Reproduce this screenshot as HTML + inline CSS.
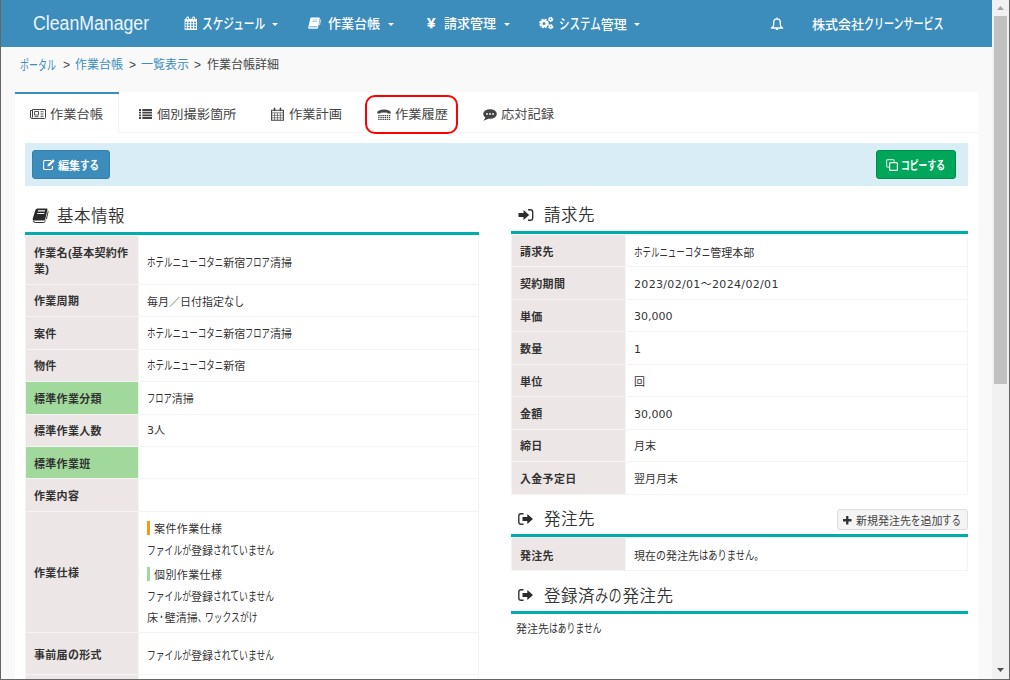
<!DOCTYPE html>
<html lang="ja"><head><meta charset="utf-8"><title>CleanManager</title>
<style>
*{box-sizing:border-box;margin:0;padding:0}
html,body{width:1010px;height:680px;overflow:hidden}
body{position:relative;background:#f9f9f9;font-family:"Liberation Sans","Noto Sans CJK JP",sans-serif;font-size:13px;color:#333;line-height:1}
.k{font-size:1.1em;display:inline-block;transform:scaleX(var(--s));transform-origin:0 50%;margin-right:calc(var(--n) * (var(--s) - 1) * 1em);white-space:nowrap}
.abs{position:absolute}
.t{position:absolute;white-space:nowrap;line-height:1}
a{color:#3c8dbc;text-decoration:none}
/* window chrome */
#lb{left:0;top:0;width:1px;height:680px;background:#666}
#rb{left:1009px;top:0;width:1px;height:680px;background:#666}
#bb{left:0;top:679px;width:1010px;height:1px;background:#666}
#sb{left:992px;top:0;width:17px;height:679px;background:#f1f1f1}
#thumb{left:994px;top:16px;width:13px;height:368px;background:#c1c1c1}
/* navbar */
#nav{left:1px;top:0;width:991px;height:47px;background:#3c8dbc;color:#fff}
#nav .t{color:#fff;font-size:13px}
#brand{font-size:20px !important;left:32px;top:13px;transform:scaleX(.885);transform-origin:0 0;color:rgba(255,255,255,.93) !important}
.caret{position:absolute;width:0;height:0;border-left:3px solid transparent;border-right:3px solid transparent;border-top:3px solid #fff;top:23px}
/* tabs */
#panel{left:15px;top:92px;width:963px;height:588px;background:#fff}
#tabline{left:15px;top:132px;width:963px;height:1px;background:#f4f4f4}
#act{left:15px;top:92px;width:104px;height:41px;background:#fff;border-right:1px solid #f4f4f4}
#act:before{content:'';position:absolute;left:0;top:0;width:104px;height:2px;background:#3c8dbc}
.tab{font-size:12.2px;transform:scaleX(1.085);transform-origin:0 0;color:#444;top:109px}
#anno{left:365px;top:95px;width:93px;height:39px;border:2px solid #f00;border-radius:10px}
/* action bar */
#bar{left:25px;top:143px;width:943px;height:43px;background:#d9edf7}
.btn{position:absolute;height:29px;border-radius:3px;color:#fff;font-size:11px;font-weight:bold;white-space:nowrap}
#edit{left:32px;top:150px;width:78px;background:#3c8dbc;border:1px solid #367fa9}
#copy{left:876px;top:150px;width:80px;background:#00a65a;border:1px solid #008d4c}
/* section headings */
.h{font-size:16.5px;letter-spacing:.5px;color:#333;font-weight:350}
.teal{position:absolute;height:3px;background:#00adab}
/* tables */
table{position:absolute;border-collapse:collapse;table-layout:fixed;font-size:11px}
td,th{border:1px solid #f4f4f4;text-align:left;vertical-align:middle;padding:0 8px;line-height:14px}
th{background:#ece6e6;font-weight:bold;color:#333;letter-spacing:.3px}
th.g{background:#a0d99b}
td{background:#fff;color:#333}
.bl{display:inline-block;width:3px;height:14px;vertical-align:-2px;margin-right:4px}
#addbtn{left:837px;top:509px;width:131px;height:21px;border:1px solid #ddd;border-radius:3px;background:#f4f4f4;font-size:11px;color:#444}


.bc{top:59px;font-size:12px}
.nv{font-weight:500}
.num{font-family:"DejaVu Sans","Noto Sans CJK JP",sans-serif;font-size:11px}
.d1 th,.d1 td{padding-top:2px}
#nav #yen{font-size:14px}
.p1{position:relative;top:1px}

</style></head>
<body>
<div id="nav" class="abs">
  <div class="t" id="brand">CleanManager</div>
  <svg class="abs" style="left:182.500px;top:16px" width="14" height="15" viewBox="0 0 14 15"><rect x="0.600" y="2.800" width="12.400" height="11.200" rx=".6" fill="#fff"/><rect x="2.400" y="0.400" width="2.600" height="4" rx="1.200" fill="#fff"/><rect x="8.400" y="0.400" width="2.600" height="4" rx="1.200" fill="#fff"/><rect x="3.250" y="1.400" width=".9" height="2.200" rx=".4" fill="#3c8dbc"/><rect x="9.250" y="1.400" width=".9" height="2.200" rx=".4" fill="#3c8dbc"/><rect x="1.4" y="5.6" width="1.800" height="1.700" fill="#3c8dbc"/><rect x="4.3" y="5.6" width="1.800" height="1.700" fill="#3c8dbc"/><rect x="7.2" y="5.6" width="1.800" height="1.700" fill="#3c8dbc"/><rect x="10.1" y="5.6" width="1.800" height="1.700" fill="#3c8dbc"/><rect x="1.4" y="8.2" width="1.800" height="1.700" fill="#3c8dbc"/><rect x="4.3" y="8.2" width="1.800" height="1.700" fill="#3c8dbc"/><rect x="7.2" y="8.2" width="1.800" height="1.700" fill="#3c8dbc"/><rect x="10.1" y="8.2" width="1.800" height="1.700" fill="#3c8dbc"/><rect x="1.4" y="10.8" width="1.800" height="1.700" fill="#3c8dbc"/><rect x="4.3" y="10.8" width="1.800" height="1.700" fill="#3c8dbc"/><rect x="7.2" y="10.8" width="1.800" height="1.700" fill="#3c8dbc"/><rect x="10.1" y="10.8" width="1.800" height="1.700" fill="#3c8dbc"/></svg>
  <div class="t nv" style="left:201px;top:17px"><span class="k" style="--n:6;--s:0.745">スケジュール</span></div><i class="caret" style="left:271px"></i>
  <svg class="abs" style="left:307.200px;top:17.300px" width="14" height="13" viewBox="0 0 14 13"><path d="M3.500 0.600h7.600q.9 0 .7.900l-1.700 9q-.2 1.200-1.300 1.200h-7.400q-1.500 0-1.100-1.500l1.900-8.300q.3-1.300 1.300-1.300z" fill="#fff"/><path d="M1.400 9.800h8" stroke="#3c8dbc" stroke-width=".8"/><path d="M4.700 2.900h4.300M4.400 4.500h4.300" stroke="#3c8dbc" stroke-opacity=".45" stroke-width="1"/><path d="M12.600 2.600l-1.100 5.400" stroke="#fff" stroke-width=".9" stroke-opacity=".9"/></svg>
  <div class="t nv" style="left:327px;top:17px">作業台帳</div><i class="caret" style="left:387px"></i>
  <div class="t" style="left:426px;top:15px;font-weight:bold;font-size:15px !important;-webkit-text-stroke:.25px #fff" id="yen">¥</div>
  <div class="t nv" style="left:443px;top:17px">請求管理</div><i class="caret" style="left:503px"></i>
  <svg class="abs" style="left:538px;top:16px" width="15" height="14" viewBox="0 0 15 14"><circle cx="5" cy="7.500" r="3.400" fill="none" stroke="#fff" stroke-width="2.800" stroke-dasharray="1.900 .77"/><circle cx="5" cy="7.500" r="2.500" fill="none" stroke="#fff" stroke-width="2"/><circle cx="11.700" cy="3.300" r="1.700" fill="none" stroke="#fff" stroke-width="1.800" stroke-dasharray="1.200 .58"/><circle cx="11.700" cy="3.300" r="1.300" fill="none" stroke="#fff" stroke-width="1.200"/><circle cx="11.700" cy="10.700" r="1.700" fill="none" stroke="#fff" stroke-width="1.800" stroke-dasharray="1.200 .58"/><circle cx="11.700" cy="10.700" r="1.300" fill="none" stroke="#fff" stroke-width="1.200"/></svg>
  <div class="t nv" style="left:558px;top:17px"><span class="k" style="--n:4;--s:0.736">システム</span>管理</div><i class="caret" style="left:633px"></i>
  <svg class="abs" style="left:768.800px;top:16.500px" width="14" height="15" viewBox="0 0 14 15"><path d="M7 1.800c-2.200 0-3.300 1.500-3.300 3.700v2.300c0 1.600-.9 2.500-2.400 3.200h11.400c-1.500-.7-2.400-1.600-2.400-3.200v-2.300c0-2.200-1.100-3.700-3.300-3.700z" fill="none" stroke="#fff" stroke-width="1.300" stroke-linejoin="round"/><path d="M5.500 11.500a1.500 1.500 0 0 0 3 0z" fill="#fff"/><path d="M7 0.500v1.300" stroke="#fff" stroke-width="1.300"/></svg>
  <div class="t nv" style="left:811px;top:17px">株式会社<span class="k" style="--n:8;--s:0.7">クリーンサービス</span></div>
</div>

<div class="t bc" style="left:20px"><a><span class="k" style="--n:4;--s:0.682">ポータル</span></a></div>
<div class="t bc" style="left:63px;color:#444">&gt;</div>
<div class="t bc" style="left:75px"><a>作業台帳</a></div>
<div class="t bc" style="left:129px;color:#444">&gt;</div>
<div class="t bc" style="left:141px"><a>一覧表示</a></div>
<div class="t bc" style="left:194px;color:#444">&gt;</div>
<div class="t bc" style="left:207px;color:#444">作業台帳詳細</div>

<div id="panel" class="abs"></div>
<div id="tabline" class="abs"></div>
<div id="act" class="abs"></div>
<svg class="abs" style="left:30px;top:109px" width="16" height="10" viewBox="0 0 16 10"><path d="M2.500 0.500h13v8q0 1-1 1h-12.500q-1.500 0-1.500-1.500v-6.500h2" fill="none" stroke="#444" stroke-width="1"/><path d="M2.500 0.500v8" stroke="#444" stroke-width="1"/><path d="M4.500 2.500h4v3.500h-4z" fill="none" stroke="#555" stroke-width="1"/><path d="M10.500 2.500h3M10.500 4.200h3M10.500 5.900h3" stroke="#777" stroke-width="1"/><path d="M4.500 7.700h4M10.500 7.700h3" stroke="#555" stroke-width="1"/></svg>
<div class="t tab" style="left:50px">作業台帳</div>
<svg class="abs" style="left:139px;top:109px" width="13" height="10" viewBox="0 0 13 10"><path d="M0 1h2M0 3.670h2M0 6.330h2M0 9h2M3.300 1h9.700M3.300 3.670h9.700M3.300 6.330h9.700M3.300 9h9.700" stroke="#444" stroke-width="1.900"/></svg>
<div class="t tab" style="left:157px">個別撮影箇所</div>
<svg class="abs" style="left:271px;top:107px" width="13" height="14" viewBox="0 0 13 14"><path d="M0.600 3.200h11.800v10h-11.800z" fill="none" stroke="#444" stroke-width="1.100"/><path d="M0.600 5.800h11.800M0.600 8.300h11.800M0.600 10.800h11.800M3.600 5.800v7.400M6.500 5.800v7.400M9.400 5.800v7.400" stroke="#555" stroke-width=".7"/><path d="M3.500 1.300v2.200M9.500 1.300v2.200" stroke="#444" stroke-width="1.600" stroke-linecap="round"/></svg>
<div class="t tab" style="left:289px">作業計画</div>
<svg class="abs" style="left:377px;top:109px" width="14" height="11" viewBox="0 0 14 11"><path d="M0.200 4.600q-.4-2 1.800-3.100 5-2.200 10 0 2.200 1.100 1.800 3.100h-3.300v-.8q-3.500-.8-7 0v.8z" fill="#444"/><path d="M1.200 6.500h12M1.200 8.400h12M1.200 10.300h12" stroke="#444" stroke-width="1.200" stroke-dasharray="1.400 .74"/></svg>
<div class="t tab" style="left:395px">作業履歴</div>
<svg class="abs" style="left:483px;top:109px" width="14" height="12" viewBox="0 0 14 12"><ellipse cx="7" cy="5" rx="6.800" ry="4.800" fill="#444"/><path d="M2.800 8l-2.300 3.700 5.500-2.200z" fill="#444"/><circle cx="4" cy="5" r=".9" fill="#fff"/><circle cx="7" cy="5" r=".9" fill="#fff"/><circle cx="10" cy="5" r=".9" fill="#fff"/></svg>
<div class="t tab" style="left:501px">応対記録</div>
<div id="anno" class="abs"></div>

<div id="bar" class="abs"></div>
<div id="edit" class="btn"><svg class="abs" style="left:10px;top:8px" width="12" height="11" viewBox="0 0 12 11"><path d="M8 1.500h-6q-1.500 0-1.500 1.500v6q0 1.500 1.500 1.500h6q1.500 0 1.500-1.500v-2" fill="none" stroke="#fff" stroke-width="1.200"/><path d="M4.500 7.500l.5-2.200 5-5 1.700 1.700-5 5z" fill="#fff"/></svg><span class="t" style="left:25px;top:9px">編集<span class="k" style="--n:2;--s:0.782">する</span></span></div>
<div id="copy" class="btn"><svg class="abs" style="left:9px;top:8px" width="12" height="12" viewBox="0 0 12 12"><rect x="0.600" y="0.600" width="7.500" height="7.500" rx="1" fill="none" stroke="#b9e3cf" stroke-width="1.200"/><rect x="3.600" y="3.600" width="7.800" height="7.800" rx="1" fill="#00a65a" stroke="#fff" stroke-width="1.200"/></svg><span class="t" style="left:24px;top:9px"><span class="k" style="--n:5;--s:0.727">コピーする</span></span></div>

<!-- LEFT -->
<svg class="abs" style="left:32px;top:208px" width="17" height="15" viewBox="0 0 17 15"><path d="M5.500 0.500h9.200q1 0 .8 1l-2.300 10.100q-.2.900-1.100.900h-10q-1.900 0-1.400-1.800l2.700-8.700q.5-1.500 2.100-1.500z" fill="#2a2a2a"/><path d="M6 2.900h7M5.300 5.500h7" stroke="#fff" stroke-width="1.100"/><path d="M1.300 12.600q.3 1.900 2 1.900h8.400q1 0 1.300-1l.3-1" fill="none" stroke="#2a2a2a" stroke-width="1"/><path d="M16.200 3.200l-1.800 8" stroke="#2a2a2a" stroke-width=".9"/></svg>
<div class="t h" style="left:57px;top:208px">基本情報</div>
<div class="teal" style="left:25px;top:232px;width:454px"></div>
<table style="left:25px;top:235px;width:454px">
<colgroup><col style="width:113px"><col></colgroup>
<tr style="height:49px"><th style="line-height:16px;padding-top:2px">作業名(基本契約作<br>業)</th><td style="padding-top:5px"><span class="k" style="--n:9;--s:0.7">ホテルニューコタニ</span>新宿<span class="k" style="--n:3;--s:0.682">フロア</span>清掃</td></tr>
<tr class="d1" style="height:32px"><th style="padding-top:0">作業周期</th><td>毎月／日付指定<span class="k" style="--n:2;--s:0.836">なし</span></td></tr>
<tr class="d1" style="height:33px"><th>案件</th><td><span class="k" style="--n:9;--s:0.7">ホテルニューコタニ</span>新宿<span class="k" style="--n:3;--s:0.682">フロア</span>清掃</td></tr>
<tr style="height:32px"><th>物件</th><td><span class="k" style="--n:9;--s:0.7">ホテルニューコタニ</span>新宿</td></tr>
<tr class="d1" style="height:33px"><th class="g">標準作業分類</th><td><span class="k" style="--n:3;--s:0.682">フロア</span>清掃</td></tr>
<tr style="height:32px"><th>標準作業人数</th><td><span class="num">3</span>人</td></tr>
<tr class="d1" style="height:32px"><th class="g">標準作業班</th><td></td></tr>
<tr class="d1" style="height:33px"><th>作業内容</th><td></td></tr>
<tr style="height:121px"><th style="padding-top:2px">作業仕様</th><td style="line-height:21px;vertical-align:top;padding-top:7px"><div><i class="bl" style="background:#f39c12"></i><span style="letter-spacing:.4px">案件作業仕様</span></div><div class="p1"><span class="k" style="--n:5;--s:0.727">ファイルが</span>登録<span class="k" style="--n:7;--s:0.727">されていません</span></div><div style="margin-top:4px"><i class="bl" style="background:#a0d99b"></i><span style="letter-spacing:.4px">個別作業仕様</span></div><div class="p1"><span class="k" style="--n:5;--s:0.727">ファイルが</span>登録<span class="k" style="--n:7;--s:0.727">されていません</span></div><div class="p1">床<span class="k" style="--n:1;--s:0.564">・</span>壁清掃<span class="k" style="--n:1;--s:0.618">、</span><span class="k" style="--n:6;--s:0.727">ワックスがけ</span></div></td></tr>
<tr style="height:42px"><th style="padding-top:3px">事前届<span class="k" style="--n:1;--s:0.909">の</span>形式</th><td style="padding-top:4px"><span class="k" style="--n:5;--s:0.727">ファイルが</span>登録<span class="k" style="--n:7;--s:0.727">されていません</span></td></tr>
<tr style="height:20px"><th></th><td></td></tr>
</table>

<!-- RIGHT -->
<svg class="abs" style="left:518px;top:209px" width="16" height="12" viewBox="0 0 16 12"><path d="M0.500 4h5v-3l5.700 5-5.700 5v-3h-5z" fill="#2b2b2b"/><path d="M10 0.800h2.400q2.300 0 2.300 2.300v5.800q0 2.300-2.300 2.300h-2.400" fill="none" stroke="#333" stroke-width="1.400"/></svg>
<div class="t h" style="left:544px;top:207px">請求先</div>
<div class="teal" style="left:511px;top:231px;width:457px"></div>
<table style="left:511px;top:234px;width:457px">
<colgroup><col style="width:114px"><col></colgroup>
<tr class="d1" style="height:32px"><th>請求先</th><td style="padding-top:4px"><span class="k" style="--n:9;--s:0.7">ホテルニューコタニ</span>管理本部</td></tr>
<tr class="d1" style="height:33px"><th>契約期間</th><td class="num" style="letter-spacing:.33px;padding-top:4px">2023/02/01～2024/02/01</td></tr>
<tr class="d1" style="height:32px"><th>単価</th><td class="num">30,000</td></tr>
<tr class="d1" style="height:33px"><th>数量</th><td class="num" style="padding-top:4px">1</td></tr>
<tr class="d1" style="height:32px"><th>単位</th><td>回</td></tr>
<tr class="d1" style="height:33px"><th>金額</th><td class="num" style="padding-top:4px">30,000</td></tr>
<tr style="height:32px"><th>締日</th><td>月末</td></tr>
<tr class="d1" style="height:33px"><th>入金予定日</th><td>翌月月末</td></tr>
</table>

<svg class="abs" style="left:518px;top:513px" width="16" height="12" viewBox="0 0 16 12"><path d="M5.500 0.800h-2.400q-2.300 0-2.300 2.300v5.800q0 2.300 2.300 2.300h2.400" fill="none" stroke="#333" stroke-width="1.400"/><path d="M4.500 4h4.800v-3l5.700 5-5.700 5v-3h-4.800z" fill="#2b2b2b"/></svg>
<div class="t h" style="left:544px;top:511px">発注先</div>
<div id="addbtn" class="abs"><svg class="abs" style="left:5px;top:6px" width="9" height="9" viewBox="0 0 9 9"><path d="M4.250 0v8.500M0 4.250h8.500" stroke="#333" stroke-width="2.300"/></svg><span class="t" style="left:18px;top:5px">新規発注先<span class="k" style="--n:1;--s:0.782">を</span>追加<span class="k" style="--n:2;--s:0.782">する</span></span></div>
<div class="teal" style="left:511px;top:534px;width:457px"></div>
<table style="left:511px;top:537px;width:457px">
<colgroup><col style="width:114px"><col></colgroup>
<tr style="height:33px"><th style="padding-top:4px">発注先</th><td style="padding-top:4px">現在<span class="k" style="--n:1;--s:0.818">の</span>発注先<span class="k" style="--n:7;--s:0.764">はありません。</span></td></tr>
</table>

<svg class="abs" style="left:518px;top:589px" width="16" height="12" viewBox="0 0 16 12"><path d="M5.500 0.800h-2.400q-2.300 0-2.300 2.300v5.800q0 2.300 2.300 2.300h2.400" fill="none" stroke="#333" stroke-width="1.400"/><path d="M4.500 4h4.800v-3l5.700 5-5.700 5v-3h-4.800z" fill="#2b2b2b"/></svg>
<div class="t h" style="left:544px;top:587px">登録済<span class="k" style="--n:2;--s:0.727">みの</span>発注先</div>
<div class="teal" style="left:511px;top:611px;width:457px"></div>
<div class="t" style="left:516px;top:623px;font-size:11px">発注先<span class="k" style="--n:6;--s:0.727">はありません</span></div>

<!-- chrome -->
<div id="sb" class="abs"></div>
<div id="thumb" class="abs"></div>
<svg class="abs" style="left:997px;top:6px" width="7" height="4" viewBox="0 0 7 4"><path d="M0 4l3.500-4 3.500 4z" fill="#a3a3a3"/></svg>
<svg class="abs" style="left:997px;top:668px" width="7" height="4" viewBox="0 0 7 4"><path d="M0 0l3.500 4 3.500-4z" fill="#505050"/></svg>
<div id="lb" class="abs"></div>
<div id="rb" class="abs"></div>
<div id="bb" class="abs"></div>

</body></html>
